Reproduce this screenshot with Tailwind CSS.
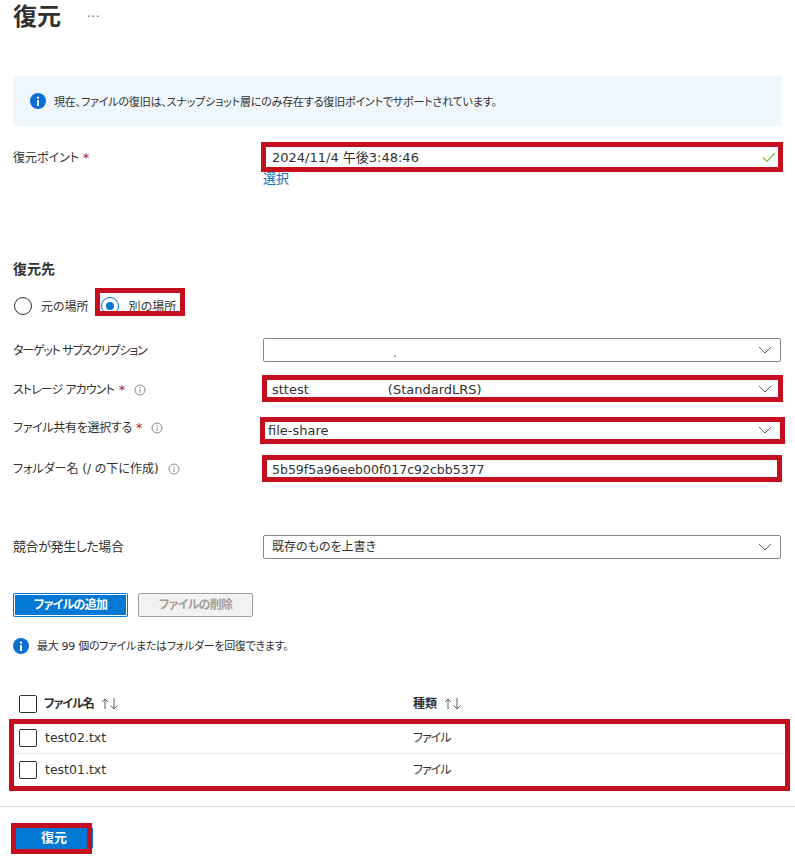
<!doctype html>
<html lang="ja">
  <head>
    <meta charset="utf-8" />
    <title>復元</title>
    <script src="https://cdn.jsdelivr.net/npm/@tailwindcss/browser@4"></script>
  </head>
  <body class="bg-white">
    <div class="relative w-[795px] h-[865px] overflow-hidden px-[13px] text-[12px] leading-[16px] text-[#323130] font-['DejaVu_Sans','Noto_Sans_CJK_JP',sans-serif] [font-feature-settings:'palt']">

      <!-- header -->
      <div class="flex items-start h-[76px]">
        <h1 class="text-[24px] leading-[30px] font-semibold font-['Noto_Sans_CJK_JP',sans-serif]">復元</h1>
        <span class="ml-[26px] mt-[7px] text-[12px] leading-[20px] text-[#605e5c] tracking-[0.5px]">···</span>
      </div>

      <!-- info banner -->
      <div class="flex items-center h-[50px] bg-[#eff6fc] rounded-[2px] pl-[17px] gap-[8px]">
        <svg class="w-4 h-4" viewBox="0 0 16 16"><circle cx="8" cy="8" r="8" fill="#0b6fd3"/><rect x="7" y="7" width="2" height="6" fill="#fff"/><circle cx="8" cy="4.6" r="1.2" fill="#fff"/></svg>
        <p class="text-[11px] tracking-[-0.17px] pt-[3px]">現在、ファイルの復旧は、スナップショット層にのみ存在する復旧ポイントでサポートされています。</p>
      </div>

      <!-- restore point -->
      <div class="grid grid-cols-[250px_518px] mt-[19px]">
        <label class="leading-[24px] pt-px">復元ポイント <span class="text-[13px] text-[#a4262c]">*</span></label>
        <div>
          <div class="relative flex items-center justify-between h-6 pl-[9px] pr-[5px]">
            <span class="text-[13px] pt-px">2024/11/4 午後3:48:46</span>
            <svg class="w-3.5 h-3.5" viewBox="0 0 14 14" fill="none" stroke="#7cb93f" stroke-width="1.1"><path d="M1 7.5 5 11.5 13 3"/></svg>
            <div class="absolute -left-[2px] -right-[2px] -top-[3px] -bottom-[3px] border-[5px] border-[#c50f1f]"></div>
          </div>
          <a class="block mt-[3px] leading-[14px] text-[13px] text-[#0f6cbd]">選択</a>
        </div>
      </div>

      <!-- destination -->
      <h2 class="mt-[76px] font-bold text-[14px] leading-[14px]">復元先</h2>
      <div class="relative flex items-center h-[18px] mt-[21px]">
        <span class="w-[18px] h-[18px] ml-px rounded-full border border-[#323130]"></span>
        <span class="ml-[9px] text-[12px] pt-px">元の場所</span>
        <span class="flex items-center justify-center w-[18px] h-[18px] ml-[12px] rounded-full border border-[#0078d4]"><span class="w-2 h-2 rounded-full bg-[#0078d4]"></span></span>
        <span class="ml-[10px] text-[12px] pt-px">別の場所</span>
        <div class="absolute left-[82px] -top-[9px] w-[90px] h-[28px] border-[5px] border-[#c50f1f]"></div>
      </div>

      <div class="grid grid-cols-[250px_518px] items-center mt-[23px]">
        <label class="pt-[2px] tracking-[-1.2px]">ターゲット サブスクリプション</label>
        <div class="flex items-center justify-between h-6 border border-[#8a8886] rounded-[2px] pl-[8px] pr-[8px]">
          <span class="ml-[121px] mt-[6px] text-[#605e5c] leading-[16px]">.</span>
          <svg class="w-[14px] h-[14px]" viewBox="0 0 14 14" fill="none" stroke="#605e5c"><path d="M1 4 7 10 13 4"/></svg>
        </div>
      </div>

      <div class="grid grid-cols-[250px_518px] items-center mt-[15px]">
        <label class="flex items-center pt-[2px]"><span class="tracking-[-0.9px]">ストレージ アカウント</span> <span class="ml-[5px] text-[13px] text-[#a4262c]">*</span>
          <svg class="w-3 h-3 ml-[9px]" viewBox="0 0 12 12" fill="none" stroke="#8a8886"><circle cx="6" cy="6" r="5"/><path d="M6 5.2V9M6 3v1.200"/></svg>
        </label>
        <div class="relative flex items-center justify-between h-6 pl-[8px] pr-[8px] border border-[#8a8886] rounded-[2px]">
          <span class="text-[13px] pt-px">sttest<span class="ml-[79px]">(StandardLRS)</span></span>
          <svg class="w-[14px] h-[14px]" viewBox="0 0 14 14" fill="none" stroke="#605e5c"><path d="M1 4 7 10 13 4"/></svg>
          <div class="absolute -left-[2px] -right-[3px] -top-[3px] -bottom-[2px] border-[5px] border-[#c50f1f]"></div>
        </div>
      </div>

      <div class="grid grid-cols-[250px_518px] items-center mt-[17px]">
        <label class="flex items-center pb-[4px]"><span class="tracking-[-0.3px]">ファイル共有を選択する</span> <span class="ml-[4px] text-[13px] text-[#a4262c]">*</span>
          <svg class="w-3 h-3 ml-[9px]" viewBox="0 0 12 12" fill="none" stroke="#8a8886"><circle cx="6" cy="6" r="5"/><path d="M6 5.2V9M6 3v1.200"/></svg>
        </label>
        <div class="relative flex items-center justify-between h-6 pl-[4px] pr-[8px] border border-[#8a8886] rounded-[2px]">
          <span class="text-[13px] pt-px">file-share</span>
          <svg class="w-[14px] h-[14px]" viewBox="0 0 14 14" fill="none" stroke="#605e5c"><path d="M1 4 7 10 13 4"/></svg>
          <div class="absolute -left-[4px] -right-[5px] -top-[2px] -bottom-[3px] border-[5px] border-[#c50f1f]"></div>
        </div>
      </div>

      <div class="grid grid-cols-[250px_518px] items-center mt-[15px]">
        <label class="flex items-center">フォルダー名 (/ の下に作成)
          <svg class="w-3 h-3 ml-[9px]" viewBox="0 0 12 12" fill="none" stroke="#8a8886"><circle cx="6" cy="6" r="5"/><path d="M6 5.2V9M6 3v1.200"/></svg>
        </label>
        <div class="relative flex items-center h-6 pl-[8px] border border-[#8a8886] rounded-[2px]">
          <span class="text-[12.5px] pt-px">5b59f5a96eeb00f017c92cbb5377</span>
          <div class="absolute -left-[2px] -right-[2px] -top-[3px] -bottom-[2px] border-[5px] border-[#c50f1f]"></div>
        </div>
      </div>

      <div class="grid grid-cols-[250px_518px] items-center mt-[54px]">
        <label class="text-[13px] tracking-[-0.4px]">競合が発生した場合</label>
        <div class="flex items-center justify-between h-6 border border-[#8a8886] rounded-[2px] pl-[8px] pr-[8px]">
          <span>既存のものを上書き</span>
          <svg class="w-[14px] h-[14px]" viewBox="0 0 14 14" fill="none" stroke="#605e5c"><path d="M1 4 7 10 13 4"/></svg>
        </div>
      </div>

      <!-- file buttons -->
      <div class="flex gap-[10px] mt-[34px]">
        <button class="w-[115px] h-6 rounded-[2px] bg-[#0078d4] font-bold text-white tracking-[-0.7px] outline outline-1 -outline-offset-2 outline-white">ファイルの追加</button>
        <button class="w-[115px] h-6 rounded-[2px] bg-[#f3f2f1] border border-[#a19f9d] font-bold text-[#a19f9d] tracking-[-0.7px]">ファイルの削除</button>
      </div>

      <div class="flex items-center gap-[8px] mt-[20px]">
        <svg class="w-4 h-4" viewBox="0 0 16 16"><circle cx="8" cy="8" r="8" fill="#0b6fd3"/><rect x="7" y="7" width="2" height="6" fill="#fff"/><circle cx="8" cy="4.6" r="1.2" fill="#fff"/></svg>
        <p class="text-[11px] tracking-[-0.3px] pt-[2px]">最大 99 個のファイルまたはフォルダーを回復できます。</p>
      </div>

      <!-- file table -->
      <div class="flex items-center h-[18px] mt-[40px] ml-[6px] font-bold">
        <span class="w-[18px] h-[18px] rounded-[2px] border border-[#323130]"></span>
        <span class="flex items-center w-[369px] ml-[7px]"><span class="tracking-[-1px]">ファイル名</span>
          <svg class="w-[18px] h-[14px] ml-[7px]" viewBox="0 0 18 14" fill="none" stroke="#605e5c"><path d="M4 12V2M1 5l3-3 3 3M13 1v11M9.500 8.500 13 12l3.500-3.500"/></svg>
        </span>
        <span class="flex items-center">種類
          <svg class="w-[18px] h-[14px] ml-[7px]" viewBox="0 0 18 14" fill="none" stroke="#605e5c"><path d="M4 12V2M1 5l3-3 3 3M13 1v11M9.500 8.500 13 12l3.500-3.500"/></svg>
        </span>
      </div>

      <div class="relative mt-[9px] ml-[1px] w-[771px]">
        <div class="flex items-center h-[32px] pl-[5px] border-b border-[#edebe9]">
          <span class="w-[18px] h-[18px] rounded-[2px] border border-[#323130]"></span>
          <span class="w-[368px] ml-[8px] text-[12.5px]">test02.txt</span>
          <span class="tracking-[-1px]">ファイル</span>
        </div>
        <div class="flex items-center h-[32px] pl-[5px]">
          <span class="w-[18px] h-[18px] rounded-[2px] border border-[#323130]"></span>
          <span class="w-[368px] ml-[8px] text-[12.5px]">test01.txt</span>
          <span class="tracking-[-1px]">ファイル</span>
        </div>
        <div class="absolute -left-[5px] -right-[5px] -top-[3px] -bottom-[5px] border-[5px] border-[#c50f1f]"></div>
      </div>

      <!-- footer -->
      <div class="border-t border-[#e1dfdd] mt-[20px] -mx-[13px] pt-[20px] pl-[15px]">
        <div class="relative w-[78px]">
          <button class="w-[78px] h-[22px] rounded-[2px] bg-[#0078d4] font-bold text-[13px] text-white">復元</button>
          <div class="absolute -left-[4px] right-[1px] -top-[4px] -bottom-[5px] border-[5px] border-[#c50f1f]"></div>
        </div>
      </div>
    </div>
  </body>
</html>
